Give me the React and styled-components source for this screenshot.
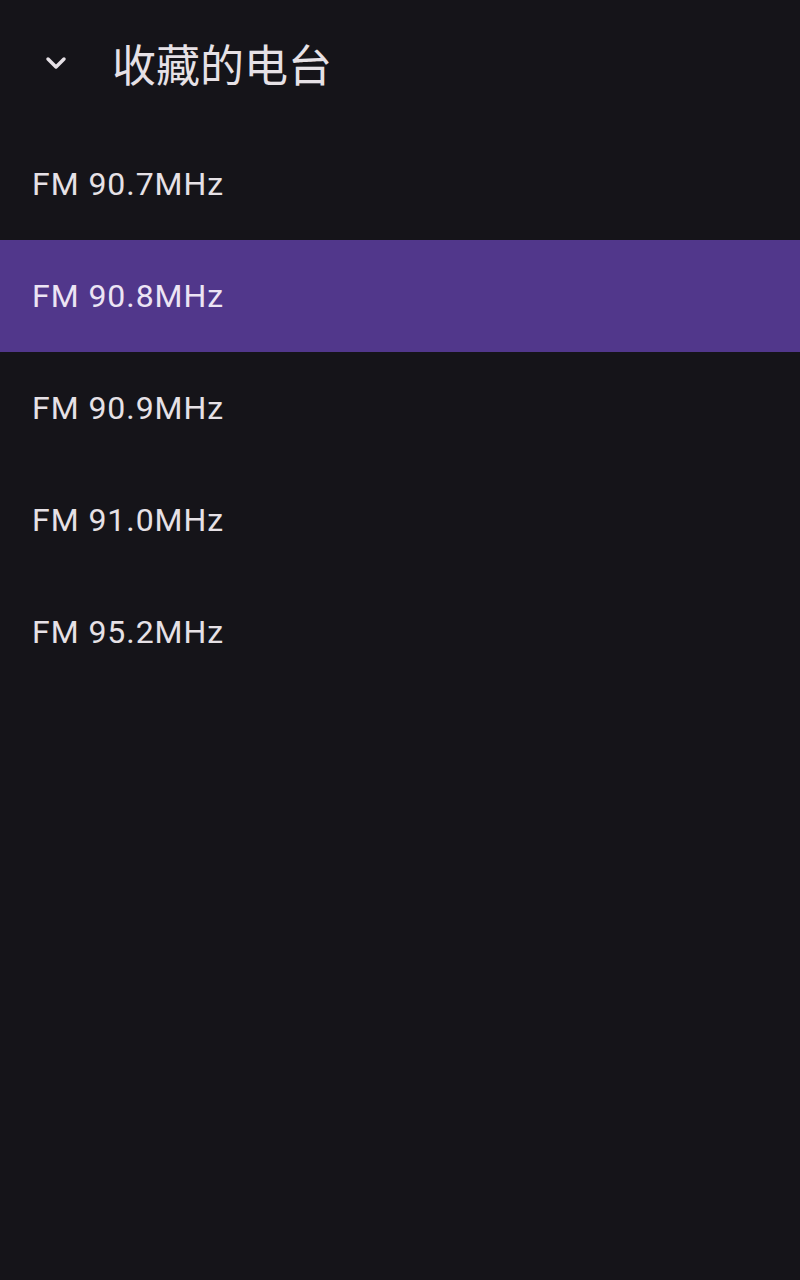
import React from 'react';
import styled, { createGlobalStyle } from 'styled-components';

const GlobalStyle = createGlobalStyle`
  html, body {
    margin: 0;
    padding: 0;
    background: #151419;
  }
  #root {
    min-height: 1280px;
    background: #151419;
  }
`;

const Page = styled.div`
  width: 800px;
  min-height: 1280px;
  background: #151419;
  color: #e6e1e6;
  font-family: Roboto, "Noto Sans", "Noto Sans CJK SC", sans-serif;
`;

const Header = styled.div`
  display: flex;
  align-items: center;
  height: 128px;
  padding-left: 40px;
  box-sizing: border-box;
`;

const IconButton = styled.div`
  width: 32px;
  height: 32px;
  display: flex;
  align-items: center;
  justify-content: center;
  margin-right: 40px;
  margin-top: -2px;
`;

const Title = styled.h1`
  margin: 0;
  font-family: "Noto Sans CJK SC", sans-serif;
  font-weight: 400;
  font-size: 44px;
  line-height: 1;
  margin-top: -2px;
  color: #e6e1e6;
`;

const List = styled.div`
  display: flex;
  flex-direction: column;
`;

const Row = styled.div`
  height: 112px;
  display: flex;
  align-items: center;
  padding-left: 32px;
  font-size: 32px;
  letter-spacing: 0.95px;
  background: ${(p) => (p.$active ? '#51378b' : 'transparent')};
  color: ${(p) => (p.$active ? '#ece4f4' : '#e6e1e6')};
`;

const stations = ['FM 90.7MHz', 'FM 90.8MHz', 'FM 90.9MHz', 'FM 91.0MHz', 'FM 95.2MHz'];

export default function App() {
  return (
    <Page>
      <GlobalStyle />
      <Header>
        <IconButton>
          <svg width="32" height="32" viewBox="0 0 24 24" fill="none" stroke="#e6e1e6" strokeWidth="2.6" strokeLinecap="round" strokeLinejoin="round">
            <path d="M6 9l6 6 6-6" />
          </svg>
        </IconButton>
        <Title>收藏的电台</Title>
      </Header>
      <List>
        {stations.map((s, i) => (
          <Row key={s} $active={i === 1}>{s}</Row>
        ))}
      </List>
    </Page>
  );
}
